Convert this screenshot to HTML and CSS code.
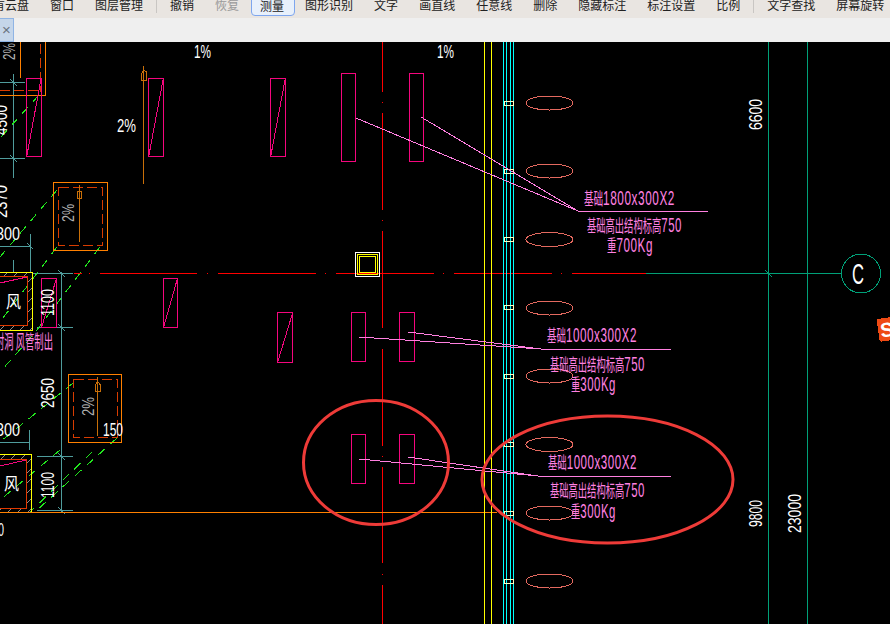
FILE: index.html
```html
<!DOCTYPE html>
<html lang="zh">
<head>
<meta charset="utf-8">
<title>测量</title>
<link rel="stylesheet" href="styles.css">
</head>
<body>
<div class="app">
  <nav class="toolbar">
    <span class="tool first">有云盘</span>
    <span class="tool">窗口</span>
    <span class="tool">图层管理</span>
    <span class="sep"></span>
    <span class="tool">撤销</span>
    <span class="tool off">恢复</span>
    <span class="tool active">测量</span>
    <span class="tool">图形识别</span>
    <span class="tool">文字</span>
    <span class="tool">画直线</span>
    <span class="tool">任意线</span>
    <span class="tool">删除</span>
    <span class="tool">隐藏标注</span>
    <span class="tool">标注设置</span>
    <span class="tool">比例</span>
    <span class="sep"></span>
    <span class="tool">文字查找</span>
    <span class="tool">屏幕旋转</span>
  </nav>
  <div class="tabbar"><div class="tab">×</div></div>
  <svg class="cad" viewBox="0 42 890 582" width="890" height="582" xmlns="http://www.w3.org/2000/svg">
    <defs>
      <pattern id="hatch" width="10" height="10" patternUnits="userSpaceOnUse">
        <path class="hatchline" d="M0 10L10 0"/>
      </pattern>
    </defs>

    <!-- teal dimension lines, left -->
    <path class="teal" d="M0 82.5H25M0 158.5H25M13.5 74V178M13.5 260V272M0 246.5H30M30.5 234V272M33 273.5H73M37 327.5H73M37 456.5H73M37 510.5H73M61.5 272V513M0 442.5H29M29.5 430V450"/>
    <path class="teal" d="M10 79L17 86M10 155L17 162M27 243L33 249M58 270L65 277M58 324L65 331M58 453L65 460M58 507L65 514"/>

    <!-- green dashed diagonals -->
    <path class="gdash" d="M39 95L0 138M57 190L0 257M57 247L-10 335M100 247L33 335L0 372M73 383L0 442M117 438L37 510M60 450L0 500M92 452L30 512"/>

    <!-- top-left fan -->
    <path class="orange" d="M20.5 42V78M45.5 42V95.5H0"/>
    <path class="rdash" d="M40.5 44V92M0 90.5H40"/>

    <!-- orange square 1 -->
    <rect class="orange" x="53.5" y="182.5" width="54" height="68"/>
    <rect class="rdash" x="58.5" y="187.5" width="44" height="58"/>
    <path class="stem" d="M79.5 185V242"/>
    <rect class="stem" x="77.5" y="191.5" width="4" height="7"/>

    <!-- orange square 2 -->
    <rect class="orange" x="68.5" y="374.5" width="53" height="68"/>
    <rect class="rdash" x="73.5" y="379.5" width="44" height="58"/>
    <path class="stem" d="M97.5 377V436"/>
    <path class="stem" d="M95.5 391.5H100.5V385L97.5 381L95.5 385Z"/>

    <!-- arrow beside 2% -->
    <path class="stem" d="M143.5 66V184M141.5 80.5H146.5V72L143.5 70L141.5 74Z"/>

    <!-- fan boxes -->
    <path class="hatchfill" d="M0 272H32V330H0ZM0 276V325H27V276Z"/>
    <path class="hatchfill" d="M0 454H31V512H0ZM0 459V508H26V459Z"/>
    <path class="yellow" d="M0 272.5H32.5V330.5H0M0 454.5H31.5V512H0"/>
    <path class="red2" d="M0 276.5H27.5V325.5H0M0 459.5H26.5V508.5H0"/>
    <path class="mag" d="M0 283L27 277M0 466L26 460"/>

    <!-- magenta rectangles -->
    <g class="mag">
      <rect x="26.5" y="78.5" width="15" height="78"/><path d="M27 155L41 79"/>
      <rect x="148.5" y="78.5" width="15" height="78"/><path d="M149 155L163 80"/>
      <rect x="270.5" y="78.5" width="15" height="78"/><path d="M271 155L285 80"/>
      <rect x="41.5" y="278.5" width="15" height="49"/><path d="M42 326L56 280"/>
      <rect x="163.5" y="278.5" width="14" height="49"/><path d="M164 326L177 280"/>
      <rect x="277.5" y="312.5" width="15" height="50"/><path d="M278 361L292 315"/>
      <rect x="341.5" y="73.5" width="14" height="88"/>
      <rect x="409.5" y="73.5" width="14" height="88"/>
      <rect x="351.5" y="312.5" width="14" height="49"/>
      <rect x="399.5" y="312.5" width="15" height="49"/>
      <rect x="351.5" y="434.5" width="14" height="49"/>
      <rect x="399.5" y="434.5" width="15" height="49"/>
    </g>

    <!-- axis lines -->
    <path class="axis" d="M74 273.5H82M89 273.5H90M100 273.5H197M207 273.5H208M218 273.5H316M325 273.5H326M336 273.5H434M443 273.5H444M454 273.5H552M561 273.5H562M572 273.5H646"/>
    <path class="axis" d="M382.5 42V92M382.5 102V103M382.5 113V210M382.5 220V221M382.5 231V328M382.5 338V339M382.5 349V446M382.5 456V457M382.5 467V563M382.5 574V575M382.5 585V624"/>
    <path class="orange" d="M0 512.5H497"/>
    <path class="grn" d="M646 273.5H841M768.5 42V624M807.5 42V624M765 270L772 277"/>
    <circle class="grn" cx="861" cy="273.5" r="19.5"/>

    <!-- vertical utility lines -->
    <path class="yellow" d="M484.5 42V624M491.5 42V624"/>
    <path class="cyan" d="M503.5 42V624M506.5 42V624M510.5 42V624M513.5 42V624"/>
    <g class="tick">
      <rect x="504" y="101.5" width="9" height="4"/>
      <rect x="504" y="169.5" width="9" height="4"/>
      <rect x="504" y="237.5" width="9" height="4"/>
      <rect x="504" y="305.5" width="9" height="4"/>
      <rect x="504" y="374.5" width="9" height="4"/>
      <rect x="504" y="442.5" width="9" height="4"/>
      <rect x="504" y="511.5" width="9" height="4"/>
      <rect x="504" y="579.5" width="9" height="4"/>
    </g>

    <!-- ellipses -->
    <g class="oval">
      <ellipse cx="549.5" cy="103" rx="23.5" ry="7"/>
      <ellipse cx="549.5" cy="171" rx="23.5" ry="7"/>
      <ellipse cx="549.5" cy="239.5" rx="23.5" ry="7"/>
      <ellipse cx="549.5" cy="308" rx="23.5" ry="7"/>
      <ellipse cx="549.5" cy="376" rx="23.5" ry="7"/>
      <ellipse cx="549.5" cy="444.5" rx="23.5" ry="7"/>
      <ellipse cx="549.5" cy="513" rx="23.5" ry="7"/>
      <ellipse cx="549.5" cy="581" rx="23.5" ry="7"/>
    </g>

    <!-- leaders -->
    <path class="pink" d="M356 118L578 211M421 117L578 211M578 211.5H708"/>
    <path class="pink" d="M359 337L541 349M408 332L541 349M541 349.5H671"/>
    <path class="pink" d="M359 459L538 476M408 457L538 476M538 476.5H671"/>

    <!-- marker -->
    <rect class="white" x="355.5" y="252.5" width="24" height="24"/>
    <rect class="yellow" x="357.5" y="254.5" width="20" height="20"/>
    <rect class="yellow" x="359.5" y="256.5" width="16" height="16"/>

    <!-- pink labels -->
    <g class="lbl">
      <text x="584" y="205" textLength="91" lengthAdjust="spacingAndGlyphs">基础<tspan class="lat">1800x300X2</tspan></text>
      <text x="587" y="232" textLength="95" lengthAdjust="spacingAndGlyphs">基础高出结构标高<tspan class="lat">750</tspan></text>
      <text x="607" y="252" textLength="46" lengthAdjust="spacingAndGlyphs">重<tspan class="lat">700Kg</tspan></text>
      <text x="547" y="342" textLength="90" lengthAdjust="spacingAndGlyphs">基础<tspan class="lat">1000x300X2</tspan></text>
      <text x="550" y="371" textLength="95" lengthAdjust="spacingAndGlyphs">基础高出结构标高<tspan class="lat">750</tspan></text>
      <text x="571" y="391" textLength="45" lengthAdjust="spacingAndGlyphs">重<tspan class="lat">300Kg</tspan></text>
      <text x="548" y="469" textLength="89" lengthAdjust="spacingAndGlyphs">基础<tspan class="lat">1000x300X2</tspan></text>
      <text x="550" y="497" textLength="95" lengthAdjust="spacingAndGlyphs">基础高出结构标高<tspan class="lat">750</tspan></text>
      <text x="571" y="518" textLength="45" lengthAdjust="spacingAndGlyphs">重<tspan class="lat">300Kg</tspan></text>
      <text x="-5" y="349" class="note" textLength="58" lengthAdjust="spacingAndGlyphs">封洞 风管制出</text>
    </g>

    <!-- white dimension text -->
    <g class="dim">
      <text x="194" y="58" textLength="17" lengthAdjust="spacingAndGlyphs">1%</text>
      <text x="437" y="58" textLength="17" lengthAdjust="spacingAndGlyphs">1%</text>
      <text x="117" y="132" textLength="19" lengthAdjust="spacingAndGlyphs">2%</text>
      <text x="-4" y="240" textLength="24" lengthAdjust="spacingAndGlyphs">300</text>
      <text x="-4" y="436" textLength="24" lengthAdjust="spacingAndGlyphs">300</text>
      <text x="103" y="436" textLength="20" lengthAdjust="spacingAndGlyphs">150</text>
      <text x="-8" y="536" textLength="12" lengthAdjust="spacingAndGlyphs">00</text>
      <text x="6" y="308" class="cjk" textLength="15" lengthAdjust="spacingAndGlyphs">风</text>
      <text x="4" y="490" class="cjk" textLength="15" lengthAdjust="spacingAndGlyphs">风</text>
      <text transform="rotate(-90 7 135)" x="7" y="135" textLength="30" lengthAdjust="spacingAndGlyphs">4500</text>
      <text transform="rotate(-90 7 218)" x="7" y="218" textLength="33" lengthAdjust="spacingAndGlyphs">2370</text>
      <text transform="rotate(-90 54 316)" x="54" y="316" textLength="27" lengthAdjust="spacingAndGlyphs">1100</text>
      <text transform="rotate(-90 54 408)" x="54" y="408" textLength="30" lengthAdjust="spacingAndGlyphs">2650</text>
      <text transform="rotate(-90 54 498)" x="54" y="498" textLength="26" lengthAdjust="spacingAndGlyphs">1100</text>
      <text transform="rotate(-90 762 130)" x="762" y="130" textLength="31" lengthAdjust="spacingAndGlyphs">6600</text>
      <text transform="rotate(-90 762 527)" x="762" y="527" textLength="27" lengthAdjust="spacingAndGlyphs">9800</text>
      <text transform="rotate(-90 801 533)" x="801" y="533" textLength="39" lengthAdjust="spacingAndGlyphs">23000</text>
      <text x="852" y="284" class="axis-c" textLength="12" lengthAdjust="spacingAndGlyphs">C</text>
    </g>
    <g class="dimgrey">
      <text transform="rotate(-90 15 60)" x="15" y="60" textLength="17" lengthAdjust="spacingAndGlyphs">2%</text>
      <text transform="rotate(-90 74 222)" x="74" y="222" textLength="18" lengthAdjust="spacingAndGlyphs">2%</text>
      <text transform="rotate(-90 94 416)" x="94" y="416" textLength="19" lengthAdjust="spacingAndGlyphs">2%</text>
    </g>

    <!-- hand-drawn marks -->
    <ellipse class="mark" cx="376" cy="462.5" rx="72.5" ry="62"/>
    <ellipse class="mark" cx="607.5" cy="479.5" rx="125.5" ry="63.5"/>

    <!-- floating IME badge -->
    <g class="badge" transform="rotate(-8 885 329)">
      <rect x="878" y="318" width="22" height="23" rx="2"/>
      <text x="880" y="337">S</text>
    </g>
  </svg>
</div>
</body>
</html>
```

FILE: styles.css
```css
html, body {
  margin: 0;
  padding: 0;
  background: #000;
}

.app {
  width: 890px;
  height: 624px;
  overflow: hidden;
  display: flex;
  flex-direction: column;
  font-family: "Noto Sans CJK SC", "Liberation Sans", sans-serif;
}

.toolbar {
  height: 18px;
  flex: none;
  display: flex;
  align-items: flex-start;
  gap: 21px;
  overflow: hidden;
  background: #e9e5e1;
  font-size: 12px;
  color: #222;
}

.tool {
  flex: none;
  height: 14px;
  line-height: 10px;
}

.tool.first { margin-left: -7px; }
.tool.off { color: #9a9a9a; }

.tool.active {
  margin: -4px -11px 0 -9px;
  padding: 4px 10px 0 8px;
  height: 14px;
  border: 1px solid #7ea6ee;
  border-radius: 4px;
  background: #e8f0fb;
  line-height: 10px;
}

.sep {
  flex: none;
  width: 1px;
  height: 13px;
  margin: 0 -8px;
  background: #c9c6c3;
}

.tabbar {
  height: 24px;
  flex: none;
  background: #efefef;
}

.tab {
  box-sizing: border-box;
  width: 15px;
  height: 24px;
  margin-left: -1px;
  border: 1px solid #8fb4e4;
  background: #c5d6ea;
  color: #6a7480;
  font: 15px/22px "Liberation Sans", sans-serif;
  text-align: center;
}

.cad {
  display: block;
  flex: none;
  background: #000;
  shape-rendering: crispEdges;
}

.cad path, .cad rect, .cad circle, .cad ellipse { fill: none; }

.teal { stroke: #4f9c9c; }
.gdash { stroke: #22e81e; stroke-dasharray: 9 7; }
.orange { stroke: #ff8000; }
.stem { stroke: #c96f08; }
.rdash { stroke: #d83c00; stroke-dasharray: 10 4; }
.red2 { stroke: #e03800; }
.yellow { stroke: #ffff00; }
.white { stroke: #fff; }
.mag, .mag path, .mag rect { stroke: #f5067e; }
.axis { stroke: #ff0000; }
.grn { stroke: #00a078; }
.cyan { stroke: #00ffff; }
.tick rect { stroke: #ffffc0; }
.oval ellipse { stroke: #e4695f; }
.pink { stroke: #ff80e0; }

.hatchline { stroke: #8c8c8c; }
.cad .hatchfill { fill: url(#hatch); fill-rule: evenodd; }

.lbl text {
  fill: #ff80e0;
  font-family: "Noto Sans CJK SC", sans-serif;
  font-size: 17px;
}

.lbl .lat {
  font-family: "Liberation Sans", sans-serif;
  font-size: 21px;
  letter-spacing: 1px;
}

.lbl .note { font-size: 19px; }

.dim text {
  fill: #fff;
  font-family: "Liberation Sans", sans-serif;
  font-size: 19px;
}

.dim .cjk {
  font-family: "Noto Sans CJK SC", sans-serif;
  font-size: 17px;
}

.dim .axis-c { font-size: 30px; }

.dimgrey text {
  fill: #b0b0b0;
  font-family: "Liberation Sans", sans-serif;
  font-size: 17px;
}

.cad .mark {
  shape-rendering: auto;
  stroke: #ee3b38;
  stroke-width: 3;
}

.cad .badge rect { fill: #ee4a14; }

.badge text {
  fill: #fff;
  font: bold 20px "Liberation Sans", sans-serif;
}
```
